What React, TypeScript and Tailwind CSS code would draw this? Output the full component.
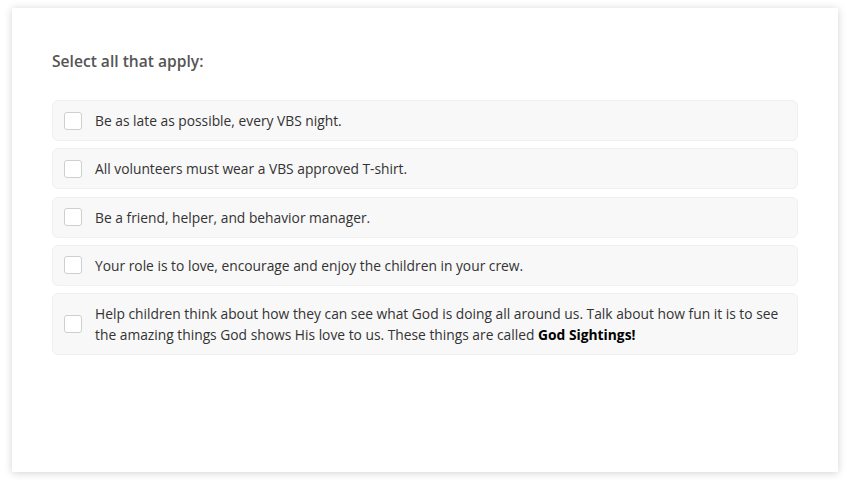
const options: { id: number; text: React.ReactNode }[] = [
  { id: 1, text: "Be as late as possible, every VBS night." },
  { id: 2, text: "All volunteers must wear a VBS approved T-shirt." },
  { id: 3, text: "Be a friend, helper, and behavior manager." },
  { id: 4, text: "Your role is to love, encourage and enjoy the children in your crew." },
  {
    id: 5,
    text: (
      <>
        Help children think about how they can see what God is doing all around us. Talk about how fun it is to
        see the amazing things God shows His love to us. These things are called{" "}
        <strong className="font-bold text-black">God Sightings!</strong>
      </>
    ),
  },
];

export default function App() {
  return (
    <div className="w-[851px] h-[488px] bg-white font-['Open_Sans',sans-serif] pt-[8px] pl-[12px]">
      <div className="w-[826px] h-[464px] bg-white shadow-[0_1px_8px_rgba(0,0,0,0.18)] pt-[41px] pl-[40px] pr-[40px]">
        <h2 className="text-[15.6px] leading-[24px] font-semibold text-[#555]">Select all that apply:</h2>
        <div className="mt-[27px] flex flex-col gap-[7.25px]">
          {options.map((opt) => (
            <label
              key={opt.id}
              className="flex items-center gap-[13px] rounded-[6px] bg-[#f8f8f8] border border-[#f0f0f0] pl-[11px] pr-[12px] py-[9px] cursor-pointer"
            >
              <span className="shrink-0 w-[18px] h-[18px] rounded-[3px] border border-[#cfcfcf] bg-white" />
              <span className="text-[13.8px] leading-[21px] text-[#333]">{opt.text}</span>
            </label>
          ))}
        </div>
      </div>
    </div>
  );
}
